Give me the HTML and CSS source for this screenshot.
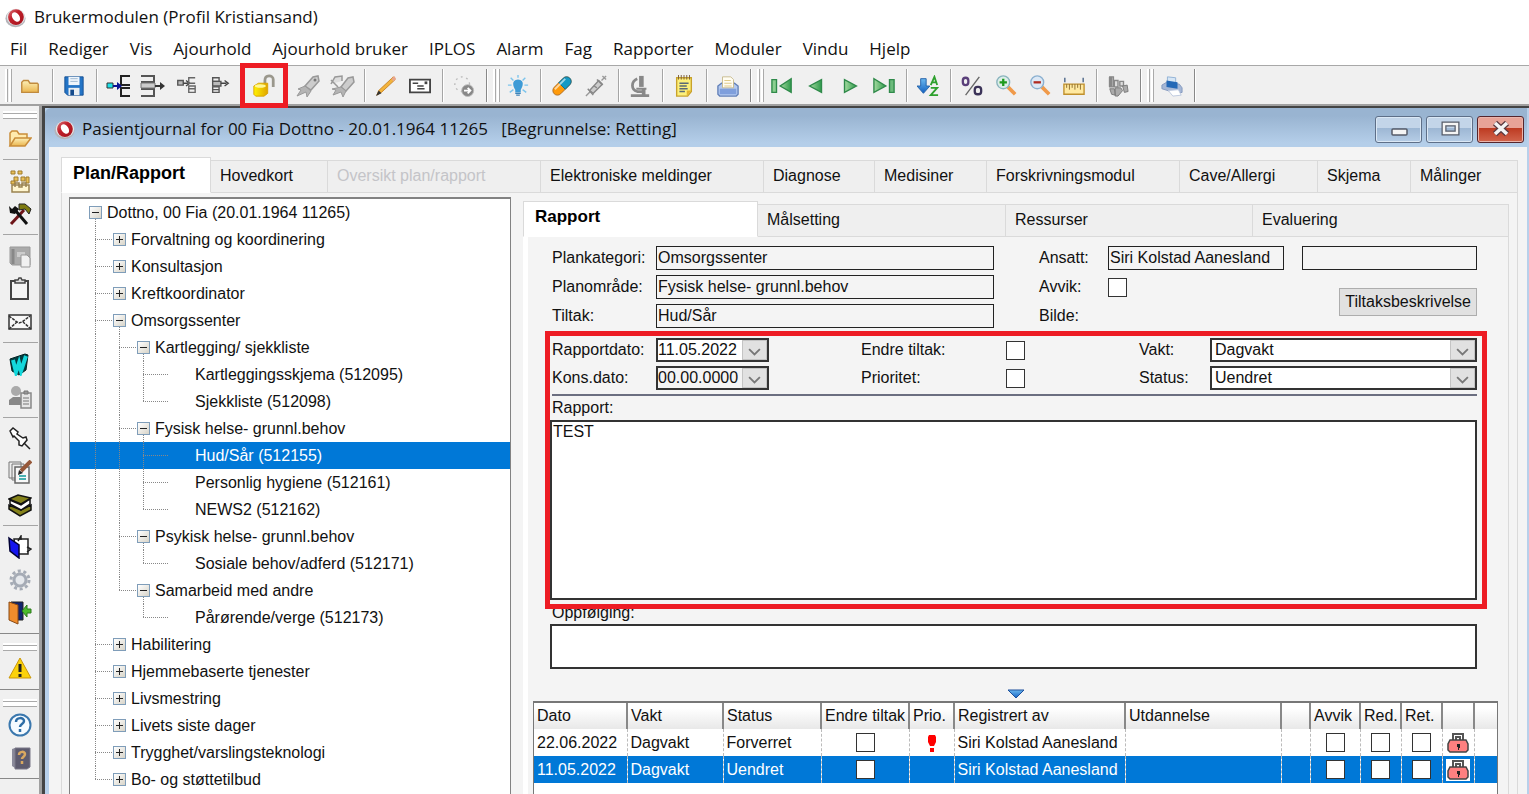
FILE: index.html
```html
<!DOCTYPE html>
<html lang="no">
<head>
<meta charset="utf-8">
<title>Brukermodulen (Profil Kristiansand)</title>
<link rel="stylesheet" href="styles.css">
</head>
<body>
<svg class="defs" aria-hidden="true">
  <defs>
    <linearGradient id="gBlue" x1="0" y1="0" x2="0" y2="1"><stop offset="0" stop-color="#6bb8f0"/><stop offset="1" stop-color="#1260c0"/></linearGradient>
    <linearGradient id="gGold" x1="0" y1="0" x2="0" y2="1"><stop offset="0" stop-color="#fdf0b8"/><stop offset="1" stop-color="#eab54e"/></linearGradient>
    <linearGradient id="gGreen" x1="0" y1="0" x2="1" y2="0"><stop offset="0" stop-color="#a5dba0"/><stop offset="1" stop-color="#2f9a4c"/></linearGradient>
    <linearGradient id="gYellow" x1="0" y1="0" x2="1" y2="0"><stop offset="0" stop-color="#fff200"/><stop offset="1" stop-color="#e0a400"/></linearGradient>
    <linearGradient id="gRed" x1="0" y1="0" x2="1" y2="1"><stop offset="0" stop-color="#d9777c"/><stop offset=".4" stop-color="#c01f2a"/><stop offset="1" stop-color="#a3121c"/></linearGradient>
    <symbol id="logo" viewBox="0 0 24 24"><ellipse cx="12" cy="13" rx="11.500" ry="10" fill="#b4b4b9"/><ellipse cx="12.500" cy="11.500" rx="10.500" ry="9.500" fill="#e6e6e8"/><circle cx="12.500" cy="11.500" r="9" fill="url(#gRed)"/><ellipse cx="12.500" cy="11.500" rx="4" ry="6" fill="#fff" transform="rotate(-35 12.500 11.500)"/></symbol>
    <symbol id="lockcase" viewBox="0 0 22 22"><path d="M6 8V2h10v6M9 8V5h4v3" fill="none" stroke="#555" stroke-width="2"/><path d="M3 8h16l2 4v6l-2 2H3l-2-2v-6z" fill="#ff8080" stroke="#444" stroke-width="1.500"/><path d="M10 12h3v4h-1v2h-1v-3h-1z" fill="#222"/></symbol>
    <symbol id="arrow" viewBox="0 0 24 20"><path d="M6 9l6 6 6-6" fill="none" stroke="#777" stroke-width="2"/></symbol>
  </defs>
</svg>

<header class="titlebar">
  <svg class="logo"><use href="#logo"/></svg>
  <h1 class="ui-text">Brukermodulen (Profil Kristiansand)</h1>
</header>

<nav class="menu ui-text">
  <button>Fil</button><button>Rediger</button><button>Vis</button><button>Ajourhold</button><button>Ajourhold bruker</button><button>IPLOS</button><button>Alarm</button><button>Fag</button><button>Rapporter</button><button>Moduler</button><button>Vindu</button><button>Hjelp</button>
</nav>

<div class="toolbar" role="toolbar" aria-label="Verktøylinje">
  <span class="grip"></span>
  <button aria-label="Åpne"><svg viewBox="0 0 24 24"><path d="M3 19V8l2-2h5l2 3h8l1 1v9z" fill="url(#gGold)" stroke="#c08a3e" stroke-width="1.500"/></svg></button>
  <span class="sep"></span>
  <button aria-label="Lagre"><svg viewBox="0 0 24 24"><path d="M2 2h20v20H5l-3-3z" fill="#2374c6" stroke="#164f91"/><path d="M6 2h12v9H6z" fill="#eef5fc"/><path d="M8 4h8M8 7h8" stroke="#9db7cf"/><path d="M6 14h12v8H6z" fill="#e9eef2"/><path d="M8 16h4v6H8z" fill="#144b8c"/></svg></button>
  <span class="sep"></span>
  <button aria-label="Sett inn"><svg class="wide" viewBox="0 0 26 24"><path d="M25 2h-9v9h9M25 14h-9v8h9" fill="none" stroke="#222" stroke-width="2"/><path d="M2 9h6v5H2z" fill="#1ce0e8" stroke="#333"/><path d="M8 12h6" stroke="#0b1494" stroke-width="2"/><path d="M12 8l5 4-5 4z" fill="#0b1494"/></svg></button>
  <button aria-label="Flytt ut"><svg class="wide" viewBox="0 0 26 24"><path d="M2 2h13v6H2M2 22h13v-7H2" fill="none" stroke="#555" stroke-width="2"/><path d="M2 9h14v5H2z" fill="#ccc" stroke="#777"/><path d="M16 12h6" stroke="#333" stroke-width="2"/><path d="M21 8l5 4-5 4z" fill="#333"/></svg></button>
  <button aria-label="Sett inn under"><svg viewBox="0 0 24 24"><path d="M3 6h6v5H3z" fill="#bbb" stroke="#555" stroke-width="1.500"/><path d="M9 9h5m-2-3 4 3-4 3" fill="none" stroke="#444" stroke-width="1.500"/><path d="M22 3h-7v6h7M15 12h7v7h-7zM15 15h7" fill="none" stroke="#666" stroke-width="1.500"/></svg></button>
  <button aria-label="Flytt"><svg viewBox="0 0 24 24"><path d="M4 3h7v4H4zM4 13h7v6H4zM4 16h7" fill="none" stroke="#555" stroke-width="1.500"/><path d="M4 7h9v5H4z" fill="#bbb" stroke="#555" stroke-width="1.500"/><path d="M13 9h6m-2-3 4 3-4 3" fill="none" stroke="#444" stroke-width="1.500"/></svg></button>
  <span class="sep"></span>
  <button class="marked" aria-label="Lås opp"><svg class="wide" viewBox="0 0 26 26"><path d="M14 12V7c0-7 9-6 9-1v8" fill="none" stroke="#9a978c" stroke-width="3"/><path d="M2 13l5-3h10v11l-4 3H4l-2-2z" fill="url(#gYellow)" stroke="#d9a300"/><ellipse cx="9" cy="13" rx="6" ry="2" fill="#fff799"/></svg></button>
  <span class="sep"></span>
  <button aria-label="Signer"><svg class="wide" viewBox="0 0 26 24"><path d="M10 12l8-9 5-1 1 5-8 9z" fill="#ccc" stroke="#999" stroke-width="1.500"/><circle cx="20" cy="6" r="1.500" fill="#777"/><path d="M10 12l6 5-4 6-1-5-9 4 4-6-3-1z" fill="#b4b4b4" stroke="#999"/></svg></button>
  <button aria-label="Signer flere"><svg class="wide" viewBox="0 0 26 24"><path d="M2 10l4-7 7-1v5M2 6l7 7" fill="#ddd" stroke="#999" stroke-width="1.500"/><path d="M12 13l7-9 5-1 1 5-8 9z" fill="#ccc" stroke="#999" stroke-width="1.500"/><path d="M12 13l5 4-3 6-2-5-8 3 3-5-4-1z" fill="#b4b4b4" stroke="#999"/></svg></button>
  <span class="sep"></span>
  <button aria-label="Rediger"><svg viewBox="0 0 24 24"><path d="M2 22l2-5L20 2l2 3L7 19z" fill="#f3b43c" stroke="#c8852a"/><path d="M1 23l3-6 3 3z" fill="#333"/><path d="M18 4l3-3 2 3-3 3z" fill="#e9a68c"/></svg></button>
  <button aria-label="Skjema"><svg viewBox="0 0 24 24"><path d="M1 5h22v14H1z" fill="#fff" stroke="#444" stroke-width="2"/><path d="M4 9h6M9 12h7M9 15h8" stroke="#444" stroke-width="1.500"/><path d="M17 7h3v3h-3z" fill="#444"/></svg></button>
  <span class="sep"></span>
  <button aria-label="Ny"><svg viewBox="0 0 24 24"><circle cx="10" cy="10" r="8" fill="none" stroke="#bbb" stroke-width="1.500" stroke-dasharray="2 4"/><circle cx="16" cy="17" r="6.500" fill="#888" stroke="#bbb"/><path d="M12 17h7m-3-3 3 3-3 3" fill="none" stroke="#fff" stroke-width="2"/></svg></button>
  <span class="sep strong"></span>
  <span class="grip"></span>
  <button aria-label="Tips"><svg viewBox="0 0 24 24"><path d="M12 5c-8 1-5 8-3 11v3h6v-3c2-3 5-10-3-11z" fill="#3e9bd6"/><path d="M9 20h6M10 22h4" stroke="#3e83b8" stroke-width="1.500"/><path d="M12 0v3M4 3l3 3M20 3l-3 3M1 11h4M23 11h-4M3 19l4-3M21 19l-4-3" stroke="#7cc4ec" stroke-width="1.500"/></svg></button>
  <span class="sep"></span>
  <button aria-label="Medisin"><svg viewBox="0 0 24 24"><g transform="rotate(-45 12 12)"><rect x="0" y="7" width="24" height="10" rx="5" fill="#ff9a0a" stroke="#b06c20"/><path d="M12 7h7a5 5 0 0 1 0 10h-7z" fill="#159ac4" stroke="#126c90"/><path d="M4 9h16" stroke="#fff" stroke-opacity=".6" stroke-width="2"/></g></svg></button>
  <button aria-label="Sprøyte"><svg viewBox="0 0 24 24"><path d="M1 23l6-6M18 6l5-5M19 1l4 4" stroke="#999" stroke-width="1.500"/><path d="M5 17L15 6l4 4L9 20z" fill="#ccc" stroke="#888" stroke-width="1.500"/><path d="M3 15l6 7M13 5l6 6M10 12l3 2" stroke="#888" stroke-width="1.500"/></svg></button>
  <span class="sep"></span>
  <button aria-label="Laboratorium"><svg viewBox="0 0 24 24"><path d="M11 1h5v12h-5z" fill="#888"/><path d="M9 4c-7 3-7 12 0 14h6" fill="none" stroke="#888" stroke-width="3"/><path d="M8 14h11v2H8zM14 16h4v5h-4zM2 21h20v3H2z" fill="#888"/></svg></button>
  <span class="sep"></span>
  <button aria-label="Notat"><svg viewBox="0 0 24 24"><path d="M4 3h16v15l-4 5H4z" fill="#fdf07a" stroke="#c8a22c" stroke-width="1.500"/><path d="M6 0v5M9 0v5M12 0v5M15 0v5M18 0v5" stroke="#7a5c38"/><path d="M7 9h10M7 12h8M7 15h9M7 18h6" stroke="#5a6a76" stroke-width="1.500"/><path d="M20 17h-5v6z" fill="#e5b52e"/></svg></button>
  <span class="sep"></span>
  <button aria-label="Skriv ut"><svg viewBox="0 0 24 24"><path d="M1 12l4-3h14l4 3v9l-2 2H3l-2-2z" fill="#b3c9ef" stroke="#6280b8" stroke-width="1.500"/><path d="M6 14V2h9l3 3v9z" fill="#fffdf2" stroke="#c6b98c"/><path d="M8 6h7M8 9h8M8 12h8" stroke="#ddc680"/><path d="M3 15h18v6H3z" fill="#7f9fdc"/></svg></button>
  <span class="sep strong"></span>
  <span class="grip"></span>
  <button aria-label="Første"><svg viewBox="0 0 24 24"><path d="M1 5h5v14H1z" fill="#8bcf90" stroke="#2f8a4a" stroke-width="1.500"/><path d="M22 4v15L10 12z" fill="url(#gGreen)" stroke="#2f8a4a" stroke-width="1.500"/></svg></button>
  <button aria-label="Forrige"><svg viewBox="0 0 24 24"><path d="M18 5v14L5 12z" fill="url(#gGreen)" stroke="#2f8a4a" stroke-width="1.500"/></svg></button>
  <button aria-label="Neste"><svg viewBox="0 0 24 24"><path d="M6 5v14l13-7z" fill="url(#gGreen)" stroke="#2f8a4a" stroke-width="1.500"/></svg></button>
  <button aria-label="Siste"><svg viewBox="0 0 24 24"><path d="M18 5h5v14h-5z" fill="#6dbb7c" stroke="#2f8a4a" stroke-width="1.500"/><path d="M1 4v15l13-7z" fill="url(#gGreen)" stroke="#2f8a4a" stroke-width="1.500"/></svg></button>
  <span class="sep"></span>
  <button aria-label="Sorter"><svg viewBox="0 0 24 24"><path d="M4 4h6v8h4l-7 8-7-8h4z" fill="url(#gBlue)" stroke="#2260a8"/><path d="M15 11l4-9 3 9M16 8h5M15 14h7l-7 8h8" fill="none" stroke="#2da02d" stroke-width="2"/></svg></button>
  <span class="sep"></span>
  <button aria-label="Prosent"><svg viewBox="0 0 24 24"><path d="M20 2L5 22" stroke="#666" stroke-width="1.500"/><rect x="2" y="3" width="6" height="8" rx="3" fill="none" stroke="#5a3f7a" stroke-width="2.500"/><rect x="15" y="13" width="7" height="8" rx="3" fill="none" stroke="#3b3358" stroke-width="2.500"/></svg></button>
  <button aria-label="Zoom inn"><svg viewBox="0 0 24 24"><path d="M14 13l8 8" stroke="#f09a4a" stroke-width="4"/><circle cx="9" cy="8" r="7" fill="#dceee8" stroke="#8ab4be" stroke-width="1.500"/><path d="M9 4v8M5 8h8" stroke="#1d9a1d" stroke-width="2.500"/></svg></button>
  <button aria-label="Zoom ut"><svg viewBox="0 0 24 24"><path d="M14 13l8 8" stroke="#f09a4a" stroke-width="4"/><circle cx="9" cy="8" r="7" fill="#dce8f5" stroke="#8ab0d0" stroke-width="1.500"/><path d="M5 8h8" stroke="#b02a20" stroke-width="2.500"/></svg></button>
  <button aria-label="Linjal"><svg viewBox="0 0 24 24"><path d="M1 10h22v11H1z" fill="#ffe9a0" stroke="#c0902c" stroke-width="1.500"/><path d="M4 10v4M7 10v6M10 10v4M13 10v6M16 10v4M19 10v6" stroke="#8a6a2c"/><path d="M2 3v5M22 3v5" stroke="#4a6486" stroke-width="1.500"/></svg></button>
  <span class="sep"></span>
  <button aria-label="Tiltak"><svg viewBox="0 0 24 24"><path d="M3 2h4v11H3zM8 6h4v7H8zM14 7h4v5h-4z" fill="#ddd" stroke="#888" stroke-width="1.500"/><path d="M2 2h4v11H2z" fill="#888"/><path d="M3 15h5l1 7-4-1zM9 14h6l2 3-5 6h-3zM17 12l5-1 1 7-4 1z" fill="#aaa" stroke="#777"/></svg></button>
  <span class="sep strong"></span>
  <span class="grip"></span>
  <button aria-label="Hurtigutskrift"><svg viewBox="0 0 24 24"><path d="M7 9V2l9 1v7z" fill="#d6e6f5" stroke="#8fb0d4"/><path d="M1 11l5-3 14 2 3 4v5l-6 1-16-5z" fill="#a5b7d6" stroke="#8297bd"/><path d="M6 6l12 2v7L6 13z" fill="#2468b6"/><path d="M8 17l11-1 3 6-9 1z" fill="#fff" stroke="#bbc7dd"/></svg></button>
  <span class="sep strong"></span>
</div>

<div class="work">
  <aside class="side" role="toolbar" aria-label="Sidelinje">
    <span class="hgrip"></span>
    <button aria-label="Åpne mappe"><svg viewBox="0 0 24 24"><path d="M2 19V6l2-2h5l2 3h8v4" fill="#ffeaae" stroke="#c98d3a" stroke-width="1.500"/><path d="M2 19l5-8h16l-6 8z" fill="url(#gGold)" stroke="#c98d3a" stroke-width="1.500"/></svg></button>
    <span class="hsep"></span>
    <button aria-label="Organisasjon"><svg viewBox="0 0 24 24"><path d="M3 2h4v3H3zM10 2h4v3h-4zM6 8h4v4H6zM13 8h4v4h-4zM3 12h4v3H3zM18 8h3v6h-3z" fill="#e8bf58" stroke="#a07c2c"/><path d="M4 16h17v7H4z" fill="#fff6d0" stroke="#9a8350" stroke-width="1.500"/><path d="M7 18v-4h4v4h3v-4h4v4" fill="none" stroke="#9a8350" stroke-width="1.500"/></svg></button>
    <button aria-label="Verktøy"><svg viewBox="0 0 24 24"><path d="M3 22L16 8" stroke="#6e1418" stroke-width="3"/><path d="M7 8l12 14" stroke="#111" stroke-width="3"/><path d="M1 4l3 3 3-3 4 3-4 5-5-1z" fill="#111"/><path d="M11 2h6l6 5-2 5-4-5-6 1z" fill="#7d7a10" stroke="#222"/></svg></button>
    <span class="hsep"></span>
    <button aria-label="Kopier"><svg viewBox="0 0 24 24"><path d="M2 3h20v18H4l-2-2z" fill="#aaa" stroke="#999"/><path d="M5 5v15" stroke="#888" stroke-width="3"/><path d="M9 8h8v5H9z" fill="#ccc"/><path d="M13 11h6l3 3v9h-9z" fill="#f1f1f1" stroke="#999"/></svg></button>
    <button aria-label="Utklipp"><svg viewBox="0 0 24 24"><path d="M3 4h17v18H3z" fill="#f4f4f4" stroke="#444" stroke-width="2"/><path d="M7 6V3h3l1-2h2l1 2h3v3z" fill="#ddd" stroke="#444" stroke-width="1.500"/></svg></button>
    <button aria-label="Melding"><svg viewBox="0 0 24 24"><path d="M1 5h22v14H1z" fill="#f8f8f8" stroke="#333" stroke-width="1.500"/><path d="M1 6l8 6 2 1 3-1 8-6M1 19l8-7M23 19l-8-7" fill="none" stroke="#333" stroke-width="1.500" stroke-dasharray="3 1"/></svg></button>
    <span class="hsep"></span>
    <button aria-label="Word"><svg viewBox="0 0 24 24"><path d="M2 7l15-5 3 1-2 15-7 5-7-4z" fill="#043c40" stroke="#022"/><path d="M5 8l3 12 3-9 2 8 5-15" fill="none" stroke="#14d8dc" stroke-width="4"/></svg></button>
    <button aria-label="Bruker"><svg viewBox="0 0 24 24"><circle cx="8" cy="6" r="5" fill="#aaa"/><path d="M1 20v-5l4-3h7l3 3v5z" fill="#888"/><path d="M13 8h10v15H13z" fill="#e6e6e6" stroke="#888" stroke-width="1.500"/><path d="M16 6h4v3h-4zM15 13h6M15 16h6M15 19h6" stroke="#777" fill="#999"/></svg></button>
    <span class="hsep"></span>
    <button aria-label="Fest"><svg viewBox="0 0 24 24"><path d="M2 4l3-3 5 4-1 2 6 4 3-1 1 3-5 6-3-1v-4L6 9 5 10z" fill="#fff" stroke="#222" stroke-width="1.500"/><path d="M16 16l6 6" stroke="#222" stroke-width="1.500"/></svg></button>
    <button aria-label="Dokumenter"><svg viewBox="0 0 24 24"><path d="M1 2h12v16H1zM4 4h12v16H4z" fill="#eee" stroke="#777"/><path d="M7 7h14v16H7z" fill="#f8f8f8" stroke="#666" stroke-width="1.500"/><path d="M11 16h7M11 19h7" stroke="#199" stroke-width="1.500"/><path d="M23 1L13 11" stroke="#96583a" stroke-width="4"/><path d="M10 15l1-5 4 3z" fill="#222"/></svg></button>
    <button aria-label="Bøker"><svg viewBox="0 0 24 24"><path d="M1 12v4l11 7 11-6v-5l-10 5z" fill="#85821a" stroke="#111" stroke-width="1.500"/><path d="M2 7v4l11 6 9-6V6l-9 6z" fill="#fff" stroke="#111" stroke-width="1.500"/><path d="M1 6l9-4 13 3-10 6z" fill="#85821a" stroke="#111" stroke-width="1.500"/></svg></button>
    <span class="hsep"></span>
    <button aria-label="Perm"><svg viewBox="0 0 24 24"><path d="M6 4h14v15H8z" fill="#fff" stroke="#222" stroke-width="1.500"/><path d="M1 3l10 7v13L2 16z" fill="#1414ee" stroke="#003" stroke-width="1.500"/><path d="M10 6l3-5v4M19 12l4 2-4 3" fill="none" stroke="#222" stroke-width="1.500"/></svg></button>
    <button aria-label="Innstillinger"><svg viewBox="0 0 24 24"><circle cx="12" cy="12" r="9" fill="none" stroke="#a5abb5" stroke-width="3" stroke-dasharray="3 2.700"/><circle cx="12" cy="12" r="6" fill="#e5e8ec" stroke="#a5abb5" stroke-width="3"/></svg></button>
    <button aria-label="Avslutt"><svg viewBox="0 0 24 24"><path d="M3 1h12v18H3z" fill="#12246e" stroke="#222"/><path d="M1 1l9 3v19l-9-4z" fill="#ef8c2c" stroke="#8a4a14"/><path d="M23 12h-4v4l-5-6 5-6v4h4z" fill="#4cbb2c" stroke="#2c7a1c"/></svg></button>
    <span class="hsep strong"></span>
    <span class="hgrip"></span>
    <button aria-label="Varsel"><svg viewBox="0 0 24 24"><path d="M12 1l11 20H1z" fill="#fbd20c" stroke="#c9960a"/><path d="M12 7v8M12 17v3" stroke="#222" stroke-width="3"/></svg></button>
    <span class="hsep strong"></span>
    <span class="hgrip"></span>
    <button aria-label="Hjelp"><svg viewBox="0 0 24 24"><circle cx="12" cy="12" r="10.500" fill="#f6fbff" stroke="#3b78ae" stroke-width="2"/><path d="M8 9c0-5 8-5 8-1 0 3-4 3-4 6M12 16v3" fill="none" stroke="#2d6da6" stroke-width="2.500"/></svg></button>
    <button aria-label="Håndbok"><svg viewBox="0 0 24 24"><path d="M4 3l3-1v20l-3-2z" fill="#8a8a9a"/><path d="M7 2h15v19l-3 2H7z" fill="#5d5b6e" stroke="#7a7888"/><path d="M11 9c0-4 6-4 6-1 0 3-3 3-3 5M14 15v3" fill="none" stroke="#d9a860" stroke-width="2.500"/></svg></button>
    <span class="hsep strong"></span>
  </aside>

  <main class="window">
    <header class="wbar">
      <svg class="logo"><use href="#logo"/></svg>
      <h2 class="ui-text">Pasientjournal for 00 Fia Dottno - 20.01.1964 11265 &nbsp; [Begrunnelse: Retting]</h2>
      <button class="wbtn" aria-label="Minimer"><svg viewBox="0 0 24 20"><rect x="5" y="10" width="15" height="6" rx="1" fill="#f4f4f4" stroke="#555b68" stroke-width="1.500"/></svg></button>
      <button class="wbtn" aria-label="Maksimer"><svg viewBox="0 0 24 20"><rect x="6" y="5" width="13" height="9" fill="none" stroke="#555b68" stroke-width="5"/><rect x="6" y="5" width="13" height="9" fill="none" stroke="#f4f4f4" stroke-width="2.500"/></svg></button>
      <button class="wbtn close" aria-label="Lukk"><svg viewBox="0 0 24 20"><path d="M6 4l12 11M18 4L6 15" stroke="#5a3a40" stroke-width="6"/><path d="M6 4l12 11M18 4L6 15" stroke="#f4f4f4" stroke-width="3.500"/></svg></button>
    </header>

    <div class="wbody">
      <div class="tabs outer" role="tablist">
        <button class="tab on" role="tab" aria-selected="true">Plan/Rapport</button><button class="tab" role="tab">Hovedkort</button><button class="tab" role="tab" disabled>Oversikt plan/rapport</button><button class="tab" role="tab">Elektroniske meldinger</button><button class="tab" role="tab">Diagnose</button><button class="tab" role="tab">Medisiner</button><button class="tab" role="tab">Forskrivningsmodul</button><button class="tab" role="tab">Cave/Allergi</button><button class="tab" role="tab">Skjema</button><button class="tab" role="tab">Målinger</button>
      </div>
      <div class="page">
        <div class="tree" role="tree" aria-label="Planer">
          <div class="row" role="treeitem"><span class="g root"><button class="x" aria-label="Lukk"></button></span>Dottno, 00 Fia (20.01.1964 11265)</div>
          <div class="row" role="treeitem"><span class="g t"></span><span class="g b"><button class="x plus" aria-label="Åpne"></button></span>Forvaltning og koordinering</div>
          <div class="row" role="treeitem"><span class="g t"></span><span class="g b"><button class="x plus" aria-label="Åpne"></button></span>Konsultasjon</div>
          <div class="row" role="treeitem"><span class="g t"></span><span class="g b"><button class="x plus" aria-label="Åpne"></button></span>Kreftkoordinator</div>
          <div class="row" role="treeitem"><span class="g t"></span><span class="g b open"><button class="x" aria-label="Lukk"></button></span>Omsorgssenter</div>
          <div class="row" role="treeitem"><span class="g v"></span><span class="g t"></span><span class="g b open"><button class="x" aria-label="Lukk"></button></span>Kartlegging/ sjekkliste</div>
          <div class="row" role="treeitem"><span class="g v"></span><span class="g v"></span><span class="g t"></span><span class="g d"></span>Kartleggingsskjema (512095)</div>
          <div class="row" role="treeitem"><span class="g v"></span><span class="g v"></span><span class="g e"></span><span class="g d"></span>Sjekkliste (512098)</div>
          <div class="row" role="treeitem"><span class="g v"></span><span class="g t"></span><span class="g b open"><button class="x" aria-label="Lukk"></button></span>Fysisk helse- grunnl.behov</div>
          <div class="row sel" role="treeitem" aria-selected="true"><span class="g v"></span><span class="g v"></span><span class="g t"></span><span class="g d"></span>Hud/Sår (512155)</div>
          <div class="row" role="treeitem"><span class="g v"></span><span class="g v"></span><span class="g t"></span><span class="g d"></span>Personlig hygiene (512161)</div>
          <div class="row" role="treeitem"><span class="g v"></span><span class="g v"></span><span class="g e"></span><span class="g d"></span>NEWS2 (512162)</div>
          <div class="row" role="treeitem"><span class="g v"></span><span class="g t"></span><span class="g b open"><button class="x" aria-label="Lukk"></button></span>Psykisk helse- grunnl.behov</div>
          <div class="row" role="treeitem"><span class="g v"></span><span class="g v"></span><span class="g e"></span><span class="g d"></span>Sosiale behov/adferd (512171)</div>
          <div class="row" role="treeitem"><span class="g v"></span><span class="g e"></span><span class="g b open"><button class="x" aria-label="Lukk"></button></span>Samarbeid med andre</div>
          <div class="row" role="treeitem"><span class="g v"></span><span class="g"></span><span class="g e"></span><span class="g d"></span>Pårørende/verge (512173)</div>
          <div class="row" role="treeitem"><span class="g t"></span><span class="g b"><button class="x plus" aria-label="Åpne"></button></span>Habilitering</div>
          <div class="row" role="treeitem"><span class="g t"></span><span class="g b"><button class="x plus" aria-label="Åpne"></button></span>Hjemmebaserte tjenester</div>
          <div class="row" role="treeitem"><span class="g t"></span><span class="g b"><button class="x plus" aria-label="Åpne"></button></span>Livsmestring</div>
          <div class="row" role="treeitem"><span class="g t"></span><span class="g b"><button class="x plus" aria-label="Åpne"></button></span>Livets siste dager</div>
          <div class="row" role="treeitem"><span class="g t"></span><span class="g b"><button class="x plus" aria-label="Åpne"></button></span>Trygghet/varslingsteknologi</div>
          <div class="row" role="treeitem"><span class="g e"></span><span class="g b"><button class="x plus" aria-label="Åpne"></button></span>Bo- og støttetilbud</div>
        </div>

        <section class="detail">
          <div class="tabs inner" role="tablist">
            <button class="tab on" role="tab" aria-selected="true">Rapport</button><button class="tab" role="tab">Målsetting</button><button class="tab" role="tab">Ressurser</button><button class="tab" role="tab">Evaluering</button>
          </div>
          <div class="sheet">
            <form class="form">
              <div class="plan">
                <label for="kat">Plankategori:</label><input class="field" id="kat" value="Omsorgssenter" readonly>
                <label class="c4" for="ansatt">Ansatt:</label><input class="field" id="ansatt" value="Siri Kolstad Aanesland" readonly><input class="field c7" aria-label="Utdannelse" readonly>
                <label class="c1" for="omr">Planområde:</label><input class="field" id="omr" value="Fysisk helse- grunnl.behov" readonly>
                <label class="c4" for="avvik">Avvik:</label><input type="checkbox" id="avvik">
                <label class="c1" for="tiltak">Tiltak:</label><input class="field" id="tiltak" value="Hud/Sår" readonly>
                <span class="c4">Bilde:</span>
                <button type="button" class="desc">Tiltaksbeskrivelse</button>
              </div>
              <div class="report">
                <div class="opts">
                  <label for="rdato">Rapportdato:</label><span class="combo date"><input id="rdato" value="11.05.2022"><button type="button" aria-label="Velg dato"><svg><use href="#arrow"/></svg></button></span>
                  <label for="endre">Endre tiltak:</label><input type="checkbox" id="endre">
                  <label for="vakt">Vakt:</label><span class="combo"><select id="vakt"><option>Dagvakt</option></select><svg class="drop"><use href="#arrow"/></svg></span>
                  <label for="kdato">Kons.dato:</label><span class="combo date"><input class="off" id="kdato" value="00.00.0000"><button type="button" aria-label="Velg dato"><svg><use href="#arrow"/></svg></button></span>
                  <label for="prio">Prioritet:</label><input type="checkbox" id="prio">
                  <label for="status">Status:</label><span class="combo"><select id="status"><option>Uendret</option></select><svg class="drop"><use href="#arrow"/></svg></span>
                </div>
                <label class="cap" for="rapport">Rapport:</label>
                <textarea id="rapport" class="area tall">TEST</textarea>
              </div>
              <label class="cap follow" for="opp">Oppfølging:</label>
              <textarea id="opp" class="area low"></textarea>
            </form>
            <button class="fold" aria-label="Vis liste"><svg viewBox="0 0 16 10"><path d="M0 1h16L8 9z" fill="url(#gBlue)" stroke="#1c4f9c"/></svg></button>
            <div class="grid">
              <table>
                <colgroup><col class="w93"><col class="w96"><col class="w98"><col class="w88"><col class="w45"><col class="w171"><col class="w156"><col class="w29"><col class="w50"><col class="w41"><col class="w41"><col class="w32"><col class="w24"></colgroup>
                <thead><tr><th>Dato</th><th>Vakt</th><th>Status</th><th>Endre tiltak</th><th>Prio.</th><th>Registrert av</th><th>Utdannelse</th><th></th><th>Avvik</th><th>Red.</th><th>Ret.</th><th></th><th></th></tr></thead>
                <tbody>
                  <tr><td>22.06.2022</td><td>Dagvakt</td><td>Forverret</td><td class="m"><input type="checkbox" aria-label="Endre tiltak"></td><td class="m"><svg class="bang" viewBox="0 0 8 18"><path d="M1 1h6l1 2v5l-2 4H2L0 8V3zM2 14h4v4H2z" fill="#f00"/></svg></td><td>Siri Kolstad Aanesland</td><td></td><td></td><td class="m"><input type="checkbox" aria-label="Avvik"></td><td class="m"><input type="checkbox" aria-label="Red."></td><td class="m"><input type="checkbox" aria-label="Ret."></td><td class="m"><svg class="case"><use href="#lockcase"/></svg></td><td></td></tr>
                  <tr class="sel"><td>11.05.2022</td><td>Dagvakt</td><td>Uendret</td><td class="m"><input type="checkbox" aria-label="Endre tiltak"></td><td></td><td>Siri Kolstad Aanesland</td><td></td><td></td><td class="m"><input type="checkbox" aria-label="Avvik"></td><td class="m"><input type="checkbox" aria-label="Red."></td><td class="m"><input type="checkbox" aria-label="Ret."></td><td class="m"><svg class="case"><use href="#lockcase"/></svg></td><td></td></tr>
                </tbody>
              </table>
            </div>
          </div>
        </section>
      </div>
    </div>
  </main>
</div>
</body>
</html>
```

FILE: styles.css
```css
* { box-sizing: border-box; }
body {
  margin: 0;
  height: 100vh;
  overflow: hidden;
  display: flex;
  flex-direction: column;
  background: #fff;
  color: #111;
  font: 16px/20px "Liberation Sans", Arial, sans-serif;
}
button, input, select, textarea { font: inherit; color: inherit; margin: 0; padding: 0; border: 0; border-radius: 0; background: none; outline: 0; }
h1, h2 { margin: 0; font-weight: 400; white-space: pre; }
svg { display: block; flex: none; }
.defs { position: absolute; width: 0; height: 0; }
.ui-text { font-family: "Open Sans", "Noto Sans", sans-serif; font-size: 17px; }
.logo { width: 21px; height: 21px; }

.titlebar { display: flex; align-items: center; gap: 8px; height: 34px; padding: 0 5px; }
.menu { display: flex; gap: 21px; height: 31px; padding: 0 10px 2px; align-items: center; }

.toolbar {
  position: relative;
  z-index: 2;
  display: flex;
  align-items: stretch;
  height: 41px;
  padding: 3px 0 2px 3px;
  background: #f0f0f0;
  border-top: 1px solid #a8a8a8;
  border-bottom: 2px solid #a0a0a0;
}
.toolbar button { width: 34px; display: grid; place-items: center; }
.toolbar svg { width: 22px; height: 22px; }
.toolbar svg.wide { width: 26px; height: 24px; }
.sep { width: 10px; background: linear-gradient(#a5a5a5, #a5a5a5) 5px 0 / 1px 100% no-repeat, linear-gradient(#fff, #fff) 6px 0 / 1px 100% no-repeat; }
.sep.strong { background: linear-gradient(#888, #888) 5px 0 / 1px 100% no-repeat, linear-gradient(#fff, #fff) 6px 0 / 1px 100% no-repeat; }
.grip { width: 10px; background: linear-gradient(#aaa, #aaa) 4px 0 / 1px 100% no-repeat, linear-gradient(#fff, #fff) 2px 0 / 2px 100% no-repeat, linear-gradient(#aaa, #aaa) 8px 0 / 1px 100% no-repeat, linear-gradient(#fff, #fff) 6px 0 / 2px 100% no-repeat; }
.marked { position: relative; }
.marked::after { content: ""; position: absolute; inset: -6px -7px; border: 5px solid #ed1c24; }

.work { flex: 1; min-height: 0; display: flex; background: #f0f0f0; }
.side { width: 45px; flex: none; display: flex; flex-direction: column; align-items: flex-start; background: linear-gradient(to right, #f0f0f0 39px, #a0a0a0 39px 42px, #444 42px 45px); }
.side button { width: 39px; height: 33px; display: grid; place-items: center; }
.side svg { width: 24px; height: 24px; }
.hsep { width: 35px; height: 9px; margin-left: 3px; background: linear-gradient(#a5a5a5, #a5a5a5) 0 4px / 100% 1px no-repeat; }
.hsep.strong { width: 39px; margin-left: 0; background: linear-gradient(#888, #888) 0 4px / 100% 1px no-repeat; }
.hgrip { width: 34px; height: 16px; margin-left: 3px; background: linear-gradient(#aaa, #aaa) 0 7px / 100% 1px no-repeat, linear-gradient(#aaa, #aaa) 0 12px / 100% 1px no-repeat, linear-gradient(#fff, #fff) 0 5px / 100% 7px no-repeat; }
.hsep + .hgrip { height: 14px; }

.window { flex: 1; min-width: 0; display: flex; flex-direction: column; padding-right: 2px; border-top: 2px solid #444; background: #b8d0ea; }
.wbar { display: flex; align-items: center; gap: 4px; height: 39px; padding: 3px 3px 0 9px; border-radius: 6px 0 0 0; background: linear-gradient(#99b4d1 0 20%, #b4cee9 90%); }
.wbar h2 { flex: 1; padding-left: 3px; }
.wbtn { width: 47px; height: 27px; display: grid; place-items: center; border: 1px solid #5e6f88; border-radius: 3px; background: linear-gradient(#c3d5e9 45%, #9db7d4 45%, #b6cde6); box-shadow: inset 0 0 0 1px #dbe8f5; }
.wbtn svg { width: 24px; height: 20px; }
.wbtn.close { border-color: #56252c; background: linear-gradient(#e8a397 45%, #bd3b22 45%, #d2654d); box-shadow: inset 0 0 0 1px #eab5ac; }

.wbody { flex: 1; min-height: 0; display: flex; flex-direction: column; margin-left: 4px; padding: 10px 9px 0 12px; background: #f4f4f4; }
.tabs { display: grid; align-items: end; flex: none; }
.tabs.outer { grid-template-columns: 150fr 117fr 213fr 223fr 111fr 112fr 193fr 138fr 93fr 107fr; }
.tabs.inner { grid-template-columns: 235fr 248fr 247fr 256fr; }
.tab { height: 33px; padding: 0 9px 1px; text-align: left; white-space: nowrap; border: 1px solid #dadada; border-left-width: 0; background: #efefef; }
.tab.on { height: 36px; padding: 0 11px 5px; border-left-width: 1px; border-bottom-color: #fff; background: #fff; color: #000; font-size: 17px; font-weight: 700; }
.outer .tab.on { font-size: 18px; }
.tab:disabled { color: #c4c4c8; }

.page { flex: 1; min-height: 0; display: grid; grid-template-columns: 442fr 986fr; column-gap: 12px; padding: 4px 8px 0 7px; border: 1px solid #dadada; border-width: 0 1px; background: #f4f4f4; }
.tree { min-height: 0; overflow: hidden; border: 2px solid #828282; border-width: 2px 1px 0; background: #fff; }
.row { display: flex; align-items: center; height: 27px; padding-left: 13px; white-space: pre; }
.row.sel { background: #0078d7; color: #fff; }
.g {
  --h: repeating-linear-gradient(to right, #888 0 1px, transparent 1px 2px);
  --v: repeating-linear-gradient(to bottom, #888 0 1px, transparent 1px 2px);
  width: 24px; height: 27px; flex: none; display: grid; place-items: center;
}
.g.root { background: var(--v) 12px 14px / 1px 13px no-repeat; }
.g.v { background: var(--v) 12px 0 / 1px 27px no-repeat; }
.g.t { background: var(--v) 12px 0 / 1px 27px no-repeat, var(--h) 12px 13px / 12px 1px no-repeat; }
.g.e { background: var(--v) 12px 0 / 1px 14px no-repeat, var(--h) 12px 13px / 12px 1px no-repeat; }
.g.b { background: var(--h) 0 13px / 12px 1px no-repeat; }
.g.b.open { background: var(--h) 0 13px / 12px 1px no-repeat, var(--v) 12px 14px / 1px 13px no-repeat; }
.g.d { width: 40px; background: var(--h) 0 13px / 14px 1px no-repeat; }
.x { width: 13px; height: 13px; border: 1px solid #7f9db9; background: linear-gradient(#222, #222) 2px 5px / 7px 1px no-repeat, linear-gradient(135deg, #fff, #d8d4c8); }
.x.plus { background: linear-gradient(#222, #222) 2px 5px / 7px 1px no-repeat, linear-gradient(#222, #222) 5px 2px / 1px 7px no-repeat, linear-gradient(135deg, #fff, #d8d4c8); }

.detail { min-width: 0; min-height: 0; display: flex; flex-direction: column; padding-top: 4px; }
.sheet { flex: 1; min-height: 0; display: flex; flex-direction: column; padding: 9px 10px 0 5px; border-left: 5px solid #fff; border-right: 1px solid #dadada; }
.form { display: flex; flex-direction: column; padding: 0 21px 0 17px; flex: none; }
.plan { display: grid; grid-template-columns: 104px 338fr 45px 69px 176fr 18px 175fr; grid-auto-rows: 24px; row-gap: 5px; align-items: center; padding-left: 2px; }
.c1 { grid-column: 1; }
.c4 { grid-column: 4; }
.c7 { grid-column: 7; }
.field { width: 100%; height: 24px; border: 1px solid #222; padding: 0 1px; }
.desc { grid-area: 2 / 7 / 4 / 8; justify-self: end; height: 28px; padding: 0 5px; white-space: nowrap; border: 1px solid #adadad; background: #e1e1e1; }
input[type="checkbox"] { appearance: none; display: block; width: 19px; height: 19px; border: 1px solid #333; background: #fff; }

.report { position: relative; padding-top: 10px; z-index: 1; }
.report::after { content: ""; position: absolute; inset: 3px -10px -9px -5px; border: 5px solid #ed1c24; pointer-events: none; }
.opts { display: grid; grid-template-columns: 104px 205fr 145fr 133fr 71px 267fr; grid-auto-rows: 24px; row-gap: 4px; align-items: center; margin-left: 2px; padding-bottom: 4px; border-bottom: 2px solid #6b6e80; }
.combo { display: flex; height: 24px; border: 2px solid #333; background: #fff; }
.combo.date { width: 113px; }
.combo input, .combo select { flex: 1; min-width: 0; }
.combo select { appearance: none; padding-left: 3px; }
.combo .off { background: #f4f4f4; }
.combo button, .drop { width: 25px; height: 20px; background: #e1e1e1; border: 1px solid #c4c4c4; pointer-events: none; }
.combo button { pointer-events: auto; }
.combo button svg { width: 23px; height: 18px; }
.cap { display: block; height: 24px; padding: 2px 2px 0; }
.area { display: block; width: 100%; resize: none; overflow: hidden; border: 2px solid #333; background: #fff; }
.tall { height: 180px; padding: 0 1px; }
.follow { padding-top: 3px; }
.low { height: 45px; }
.fold { display: block; align-self: center; margin: 20px 0 2px; }
.fold svg { width: 16px; height: 10px; }
.grid { flex: 1; min-height: 0; overflow: hidden; border: 1px solid #777; border-width: 2px 1px 0; background: #fff; }
table { width: 100%; table-layout: fixed; border-collapse: collapse; }
th, td { height: 27px; padding: 0 3px; text-align: left; font-weight: 400; white-space: nowrap; overflow: hidden; }
th { height: 26px; padding: 0 0 0 3px; border-right: 2px solid #888; background: linear-gradient(#fff 20%, #e8e8e8); }
td { border-right: 1px dashed #bbb; }
tr > :last-child { border-right: 0; }
td.m input, td.m svg { margin: 0 auto; }
td.m { padding: 0; }
tr.sel { background: #0078d7; color: #fff; }
tr.sel .case { background: #fff; }
.bang { width: 8px; height: 18px; }
.case { width: 24px; height: 22px; }
.w93 { width: 93px; } .w96 { width: 96px; } .w98 { width: 98px; } .w88 { width: 88px; } .w45 { width: 45px; } .w171 { width: 171px; } .w156 { width: 156px; }
.w29 { width: 29px; } .w50 { width: 50px; } .w41 { width: 41px; } .w32 { width: 32px; } .w24 { width: 24px; }
```
